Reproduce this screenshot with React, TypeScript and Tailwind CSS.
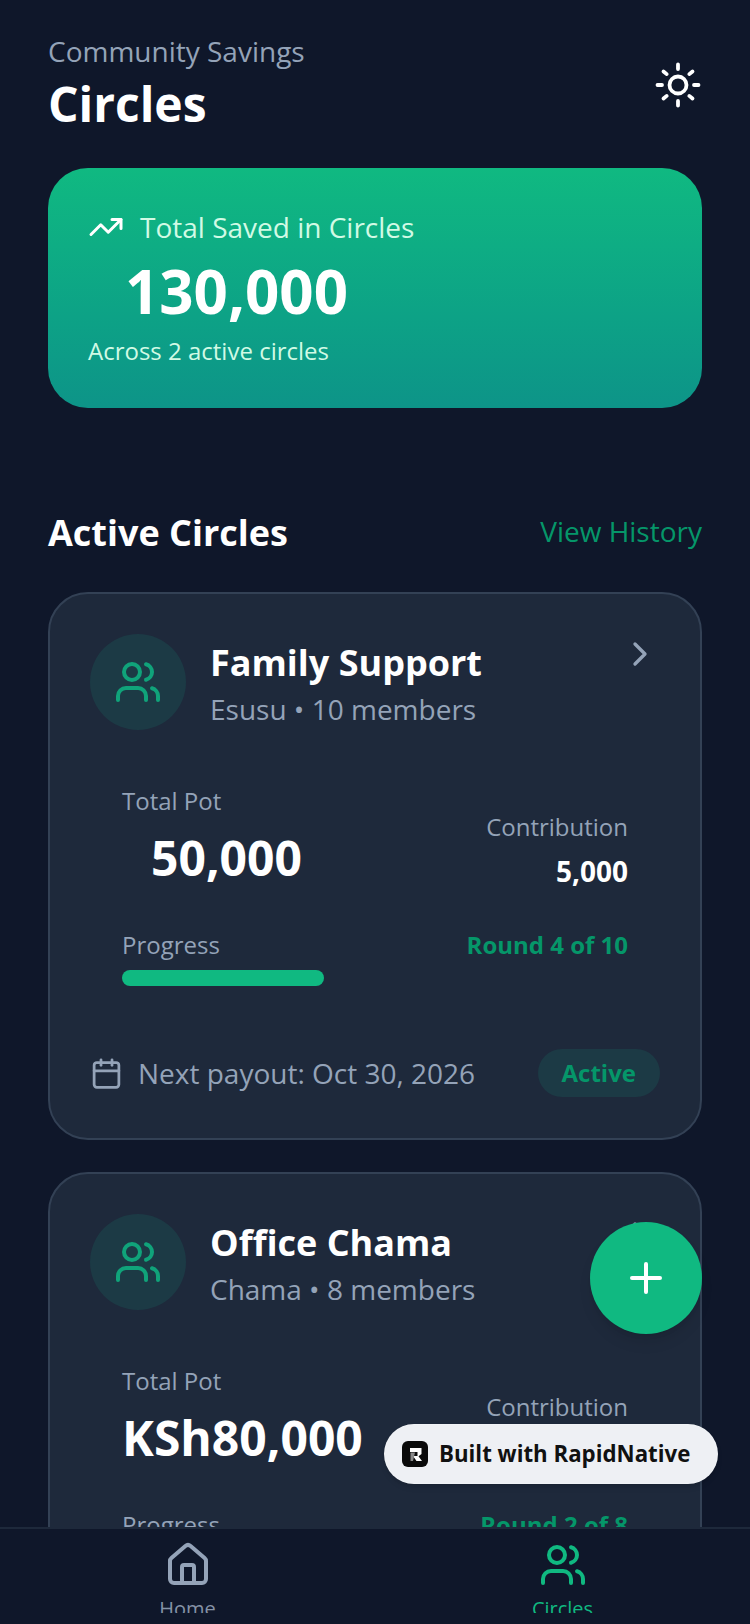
import { Calendar, ChevronRight, House, Plus, TrendingUp, Users } from 'lucide-react';

const circles = [
  {
    id: 'family',
    name: 'Family Support',
    meta: 'Esusu • 10 members',
    pot: '50,000',
    potIndent: true,
    contribution: '5,000',
    round: 'Round 4 of 10',
    progress: 40,
  },
  {
    id: 'office',
    name: 'Office Chama',
    meta: 'Chama • 8 members',
    pot: 'KSh80,000',
    potIndent: false,
    contribution: '10,000',
    round: 'Round 2 of 8',
    progress: 25,
  },
];

type Circle = (typeof circles)[number];

const SunIcon = () => (
  <svg viewBox="0 0 48 48" className="h-12 w-12 text-white" fill="none" stroke="currentColor" strokeWidth={3.8} strokeLinecap="round">
    <circle cx="24" cy="24" r="8.5" />
    <path d="M24 3.5v4.5M24 40v4.5M3.5 24H8M40 24h4.5M9.5 10.5l3.2 2.6M35.3 34.9l3.2 2.6M9.5 37.5l3.2-2.6M35.3 13.1l3.2-2.6" />
  </svg>
);

const CircleCard = ({ circle }: { circle: Circle }) => (
  <div className="shrink-0 h-[548px] rounded-[40px] border-2 border-[#334155] bg-[#1e293b] p-10">
    <div className="flex items-start">
      <div className="flex h-24 w-24 items-center justify-center rounded-full bg-[#1c3a45]">
        <Users className="h-12 w-12 text-[#10a37a]" strokeWidth={2} />
      </div>
      <div className="ml-6 flex-1 pt-1">
        <div className="text-[36px] font-bold leading-[50px] text-white">{circle.name}</div>
        <div className="mt-px text-[28px] leading-[40px] text-[#94a3b8]">{circle.meta}</div>
      </div>
      <ChevronRight className="h-10 w-10 text-[#94a3b8]" strokeWidth={2} />
    </div>

    <div className="mt-[53px] px-8">
      <div className="flex items-start justify-between">
        <div>
          <div className="text-[24px] leading-[36px] text-[#94a3b8]">Total Pot</div>
          <div className={`mt-[7px] text-[48px] font-bold leading-[64px] text-white ${circle.potIndent ? 'pl-[29px]' : ''}`}>
            {circle.pot}
          </div>
        </div>
        <div className="pt-[26px] text-right">
          <div className="text-[24px] leading-[36px] text-[#94a3b8]">Contribution</div>
          <div className="mt-1.5 text-[28px] font-bold leading-[40px] text-white">{circle.contribution}</div>
        </div>
      </div>
      <div className="mt-[36px] flex items-center justify-between">
        <span className="text-[24px] leading-[36px] text-[#94a3b8]">Progress</span>
        <span className="text-[24px] font-bold leading-[36px] text-[#059669]">{circle.round}</span>
      </div>
      <div className="mt-[7px] h-4 rounded-full">
        <div className="h-4 rounded-full bg-[#10b981]" style={{ width: `${circle.progress}%` }} />
      </div>
    </div>

    <div className="mt-[63px] flex items-center justify-between">
      <div className="flex items-center">
        <Calendar className="h-[33px] w-[33px] text-[#94a3b8]" strokeWidth={2} />
        <span className="ml-[15px] text-[28px] leading-[40px] text-[#94a3b8]">Next payout: Oct 30, 2026</span>
      </div>
      <div className="flex h-12 items-center rounded-full bg-[#1c3a45] px-6 text-[24px] font-bold text-[#059669]">
        Active
      </div>
    </div>
  </div>
);

const NavItem = ({ label, active, icon }: { label: string; active?: boolean; icon: React.ReactNode }) => (
  <div className={`flex flex-1 flex-col items-center pt-3 ${active ? 'text-[#10b981]' : 'text-[#8592a6]'}`}>
    <div className={active ? 'text-[#10b981]' : 'text-[#94a3b8]'}>{icon}</div>
    <div className="mt-1 h-5 overflow-hidden text-[20px] leading-[32px]">{label}</div>
  </div>
);

export default function App() {
  return (
    <div className="relative flex h-[1624px] w-[750px] flex-col overflow-hidden bg-[#0f172a] font-['Open_Sans',sans-serif]">
      <div className="flex min-h-0 flex-1 flex-col overflow-hidden px-12">
        <div className="flex shrink-0 items-center justify-between pt-8">
          <div>
            <div className="text-[28px] leading-[38px] text-[#94a3b8]">Community Savings</div>
            <div className="mt-px text-[48px] font-bold leading-[66px] text-white">Circles</div>
          </div>
          <SunIcon />
        </div>

        <div className="mt-[31px] h-60 shrink-0 rounded-[40px] bg-gradient-to-b from-[#10b981] to-[#0d9488] px-10 pt-[39px]">
          <div className="flex items-center">
            <TrendingUp className="h-9 w-9 text-white" strokeWidth={2} />
            <span className="ml-4 text-[28px] leading-[40px] text-[#d1fae5]">Total Saved in Circles</span>
          </div>
          <div className="mt-1.5 pl-[37px] text-[60px] font-bold leading-[76px] text-white">130,000</div>
          <div className="mt-1 text-[24px] leading-[36px] text-[#d1fae5]">Across 2 active circles</div>
        </div>

        <div className="mt-[100px] flex shrink-0 items-center justify-between">
          <span className="text-[36px] font-bold leading-[50px] text-white">Active Circles</span>
          <span className="mb-1 text-[28px] leading-[40px] text-[#059669]">View History</span>
        </div>

        <div className="mt-[34px] flex flex-col gap-8">
          {circles.map((circle) => (
            <CircleCard key={circle.id} circle={circle} />
          ))}
        </div>
      </div>

      <div className="flex h-[97px] shrink-0 border-t-2 border-[#1e293b] bg-[#0f172a]">
        <NavItem label="Home" icon={<House className="h-12 w-12" strokeWidth={2} />} />
        <NavItem label="Circles" active icon={<Users className="h-12 w-12" strokeWidth={2} />} />
      </div>

      {/* floating add button */}
      <div className="absolute left-[590px] top-[1222px] flex h-28 w-28 items-center justify-center rounded-full bg-[#10b981] shadow-lg">
        <Plus className="h-12 w-12 text-white" strokeWidth={2} />
      </div>

      {/* built-with pill */}
      <div className="absolute left-[384px] top-[1424px] flex h-[60px] w-[334px] items-center rounded-full border border-white/20 bg-[#eef0f4] pl-[17px] shadow-md">
        <svg viewBox="0 0 26 26" className="h-[26px] w-[26px]">
          <rect width="26" height="26" rx="6" fill="#0a0a0a" />
          <path d="M8 7h11.5v6l-3 2.2L20 20h-5.5L11 15h4.5v-4H8z" fill="#ffffff" />
          <path d="M8.5 11.5H13L11 20H8.5z" fill="#8a8a8a" />
        </svg>
        <span className="ml-[11px] text-[22.25px] font-bold leading-none text-[#111111]">Built with RapidNative</span>
      </div>
    </div>
  );
}
